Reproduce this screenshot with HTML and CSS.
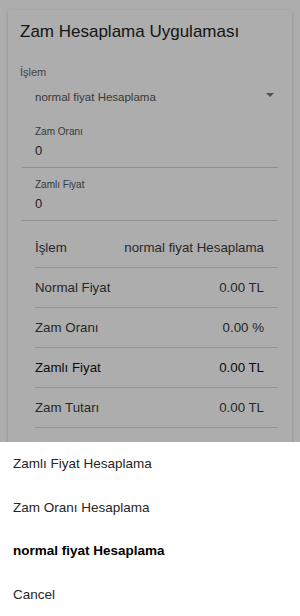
FILE: index.html
```html
<!DOCTYPE html>
<html lang="tr">
<head>
    <meta charset="UTF-8">
    <meta name="viewport" content="width=device-width, initial-scale=1.0">
    <title>Zam Hesaplama</title>
    <link rel="stylesheet" href="styles.css">
</head>
<body>
    <div class="content">
        <div class="card">
            <div class="card-title">Zam Hesaplama Uygulaması</div>
            <div class="field-label">İşlem</div>
            <div class="select">
                <span>normal fiyat Hesaplama</span>
                <span class="arrow"></span>
            </div>
            <div class="input-item">
                <div class="input-label">Zam Oranı</div>
                <div class="input-value">0</div>
            </div>
            <div class="input-item">
                <div class="input-label">Zamlı Fiyat</div>
                <div class="input-value">0</div>
            </div>
            <div class="result-list">
                <div class="row"><span>İşlem</span><span>normal fiyat Hesaplama</span></div>
                <div class="row"><span>Normal Fiyat</span><span>0.00 TL</span></div>
                <div class="row"><span>Zam Oranı</span><span>0.00 %</span></div>
                <div class="row strong"><span>Zamlı Fiyat</span><span>0.00 TL</span></div>
                <div class="row"><span>Zam Tutarı</span><span>0.00 TL</span></div>
            </div>
        </div>
    </div>

    <div class="backdrop"></div>
    <div class="action-sheet">
        <button type="button">Zamlı Fiyat Hesaplama</button>
        <button type="button">Zam Oranı Hesaplama</button>
        <button type="button" class="selected">normal fiyat Hesaplama</button>
        <button type="button">Cancel</button>
    </div>
</body>
</html>
```

FILE: styles.css
```css
*{
    margin: 0;
    padding: 0;
    box-sizing: border-box;
}
body{
    font-family: "Liberation Sans", Arial, sans-serif;
    background-color: #fff;
    width: 300px;
    height: 616px;
    overflow: hidden;
    color: #000;
}
.content{
    padding: 10px 8px 0;
}
.card{
    background-color: #fff;
    box-shadow: 0 1px 3px rgba(0,0,0,0.25);
    border-radius: 3px;
    padding: 11px 14px 20px 12px;
    height: 460px;
}
.card-title{
    font-size: 17px;
    line-height: 22px;
    color: #222;
}
.field-label{
    margin-top: 22px;
    font-size: 11px;
    line-height: 14px;
    color: #666;
}
.select{
    display: flex;
    justify-content: space-between;
    align-items: center;
    height: 36px;
    padding: 0 4px 0 15px;
    font-size: 11.5px;
    color: #555;
}
.select .arrow{
    width: 0;
    height: 0;
    border-left: 4px solid transparent;
    border-right: 4px solid transparent;
    border-top: 4px solid #777;
    margin-top: -5px;
}
.input-item{
    margin-left: 2px;
    padding: 11px 0 0 13px;
    height: 53px;
    border-bottom: 1px solid #d6d6d6;
}
.input-label{
    font-size: 10px;
    line-height: 12px;
    color: #555;
}
.input-value{
    margin-top: 4px;
    font-size: 13px;
    line-height: 18px;
    color: #333;
}
.result-list{
    margin: 7px 0 0 15px;
}
.row{
    display: flex;
    justify-content: space-between;
    align-items: center;
    height: 40px;
    padding: 0 14px 0 0;
    border-bottom: 1px solid #dcdcdc;
    font-size: 13.3px;
    color: #3a3a3a;
}
.row.strong{
    color: #111;
}
.backdrop{
    position: fixed;
    inset: 0;
    background-color: rgba(0,0,0,0.32);
}
.action-sheet{
    position: fixed;
    left: 0;
    right: 0;
    bottom: 0;
    background-color: #fff;
    display: flex;
    flex-direction: column;
}
.action-sheet button{
    height: 43.5px;
    border: none;
    background: none;
    text-align: left;
    padding: 0 13px;
    font-family: "Liberation Sans", Arial, sans-serif;
    font-size: 13.5px;
    color: #262626;
}
.action-sheet .selected{
    font-weight: bold;
    color: #000;
}
```
